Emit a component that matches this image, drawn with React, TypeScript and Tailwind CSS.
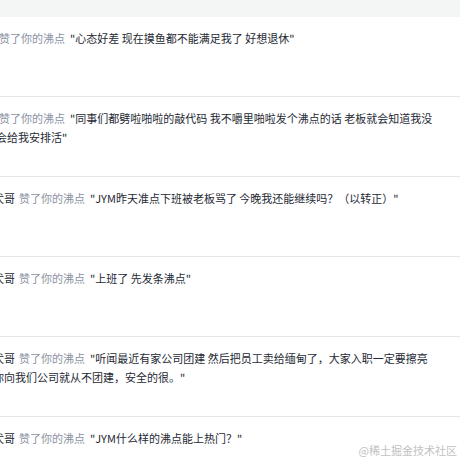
const items = [
  { name: "", text: "心态好差 现在摸鱼都不能满足我了 好想退休", offset: "-ml-[4px]" },
  {
    name: "",
    text: "同事们都劈啦啪啦的敲代码 我不嚼里啪啦发个沸点的话 老板就会知道我没会给我安排活",
    offset: "-ml-[4px]",
  },
  { name: "犬哥", text: "JYM昨天准点下班被老板骂了 今晚我还能继续吗？（以转正）", offset: "-ml-[7px]" },
  { name: "犬哥", text: "上班了 先发条沸点", offset: "-ml-[7px]" },
  {
    name: "犬哥",
    text: "听闻最近有家公司团建 然后把员工卖给缅甸了，大家入职一定要擦亮你向我们公司就从不团建，安全的很。",
    offset: "-ml-[7px]",
  },
  { name: "犬哥", text: "JYM什么样的沸点能上热门？", offset: "-ml-[7px]" },
];

export default function App() {
  return (
    <div className="relative w-[460px] h-[460px] overflow-hidden bg-white font-['Noto_Sans_CJK_SC',sans-serif]">
      <div className="h-[17px] bg-[#f4f5f5]" />
      {items.map((item, i) => (
        <div key={i} className="h-[80px] border-b border-[#e4e6eb] pt-3 overflow-hidden">
          <p className={`${item.offset} w-[441px] text-[11px] leading-[19px] text-[#252933]`}>
            {item.name ? (
              <span className="mr-[4px]">{item.name}</span>
            ) : (
              <span className="inline-block w-[3px]" />
            )}
            <span className="mr-[5px] text-[#8a919f]">赞了你的沸点</span>
            <span>"{item.text}"</span>
          </p>
        </div>
      ))}
      <div className="absolute right-[3px] bottom-[4px] text-[11px] leading-none text-[#c2c2c2]">
        @稀土掘金技术社区
      </div>
    </div>
  );
}
